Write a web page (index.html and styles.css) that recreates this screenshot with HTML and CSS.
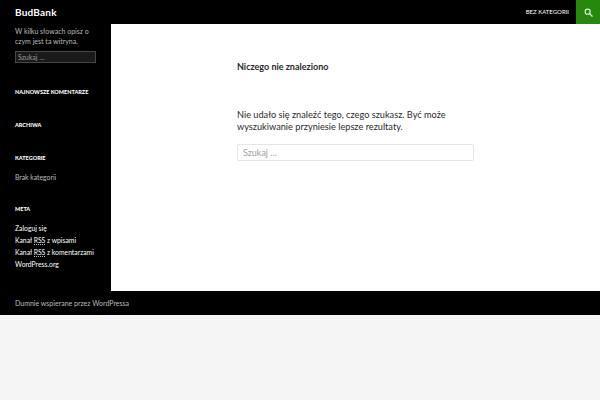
FILE: index.html
```html
<!DOCTYPE html>
<html lang="pl">
<head>
    <meta charset="UTF-8">
    <meta name="viewport" content="width=device-width, initial-scale=1.0">
    <title>BudBank</title>
    <link rel="stylesheet" href="styles.css">
</head>
<body>
    <header class="site-header">
        <h1 class="site-title">BudBank</h1>
        <nav class="primary-nav">
            <a href="#">Bez kategorii</a>
        </nav>
        <div class="search-toggle">
            <svg width="9" height="9" viewBox="0 0 16 16">
                <circle cx="6.5" cy="6.5" r="4.5" fill="none" stroke="#e9f3e6" stroke-width="2"/>
                <line x1="10" y1="10" x2="14.5" y2="14.5" stroke="#e9f3e6" stroke-width="2.4" stroke-linecap="round"/>
            </svg>
        </div>
    </header>

    <div class="site-main">
        <aside class="sidebar">
            <p class="site-description">W kilku słowach opisz o czym jest ta witryna.</p>

            <div class="widget widget-search">
                <input type="search" class="search-field" placeholder="Szukaj …">
            </div>

            <div class="widget">
                <h2 class="widget-title">Najnowsze komentarze</h2>
            </div>

            <div class="widget">
                <h2 class="widget-title">Archiwa</h2>
            </div>

            <div class="widget widget-list">
                <h2 class="widget-title">Kategorie</h2>
                <ul>
                    <li class="plain">Brak kategorii</li>
                </ul>
            </div>

            <div class="widget widget-list">
                <h2 class="widget-title">Meta</h2>
                <ul>
                    <li><a href="#">Zaloguj się</a></li>
                    <li><a href="#">Kanał <abbr>RSS</abbr> z wpisami</a></li>
                    <li><a href="#">Kanał <abbr>RSS</abbr> z komentarzami</a></li>
                    <li><a href="#">WordPress.org</a></li>
                </ul>
            </div>
        </aside>

        <main class="content">
            <h1 class="page-title">Niczego nie znaleziono</h1>
            <p class="page-text">Nie udało się znaleźć tego, czego szukasz. Być może wyszukiwanie przyniesie lepsze rezultaty.</p>
            <input type="search" class="content-search" placeholder="Szukaj …">
        </main>
    </div>

    <footer class="site-footer">
        <a href="#">Dumnie wspierane przez WordPressa</a>
    </footer>
</body>
</html>
```

FILE: styles.css
```css
body {
    margin: 0;
    padding: 0;
    background-color: #f5f5f5;
    font-family: Lato, "Liberation Sans", sans-serif;
    color: #2b2b2b;
}

a {
    text-decoration: none;
}

.site-header {
    display: flex;
    align-items: center;
    height: 24px;
    background-color: #000;
}

.site-title {
    margin: 0 0 0 15px;
    font-size: 10px;
    font-weight: 700;
    line-height: 24px;
    letter-spacing: 0.2px;
    color: #fff;
    flex: 1;
}

.primary-nav a {
    display: block;
    padding: 0 7px;
    font-size: 6px;
    line-height: 24px;
    text-transform: uppercase;
    color: #fff;
}

.search-toggle {
    display: flex;
    align-items: center;
    justify-content: center;
    width: 24px;
    height: 24px;
    background-color: #24890d;
}

.site-main {
    display: flex;
    height: 267px;
    overflow: hidden;
    background-color: #000;
}

.sidebar {
    width: 81px;
    padding: 2px 15px 0 15px;
    color: #bbb;
    font-size: 7px;
}

.site-description {
    margin: 0 0 5px;
    line-height: 10px;
    color: #bbb;
}

.widget {
    margin-bottom: 24px;
}

.widget-search {
    margin-bottom: 25px;
}

.widget-list {
    margin-bottom: 22px;
}

.search-field {
    box-sizing: border-box;
    display: block;
    width: 81px;
    height: 12px;
    margin: 0;
    padding: 0 2px;
    background-color: rgba(255, 255, 255, 0.1);
    border: 1px solid rgba(255, 255, 255, 0.2);
    border-radius: 0;
    font-family: Lato, "Liberation Sans", sans-serif;
    font-size: 7px;
    color: #fff;
    outline: none;
}

.search-field::placeholder {
    color: #999;
}

.widget-title {
    margin: 0;
    font-size: 5.5px;
    font-weight: 900;
    line-height: 9px;
    text-transform: uppercase;
    color: #fff;
}

.widget ul {
    list-style: none;
    margin: 8px 0 0;
    padding: 0;
}

.widget li {
    line-height: 12px;
    white-space: nowrap;
    font-size: 6.8px;
}

.widget li a {
    color: #fff;
}

.widget li.plain {
    color: #bbb;
}

abbr {
    text-decoration: none;
    border-bottom: 1px dotted #bbb;
}

.content {
    flex: 1;
    padding: 38px 0 0 126px;
    background-color: #fff;
}

.page-title {
    margin: 0;
    font-size: 9px;
    font-weight: 700;
    line-height: 9px;
    color: #2b2b2b;
}

.page-text {
    width: 237px;
    margin: 38px 0 11px;
    font-size: 9.2px;
    line-height: 12px;
}

.content-search {
    box-sizing: border-box;
    display: block;
    width: 237px;
    height: 17px;
    margin: 0;
    padding: 0 5px;
    border: 1px solid rgba(0, 0, 0, 0.1);
    border-radius: 2px;
    font-family: Lato, "Liberation Sans", sans-serif;
    font-size: 9px;
    color: #2b2b2b;
    outline: none;
}

.content-search::placeholder {
    color: #a0a0a0;
}

.site-footer {
    height: 24px;
    padding-left: 15px;
    background-color: #000;
    font-size: 7px;
    line-height: 24px;
}

.site-footer a {
    color: #bbb;
}
```
